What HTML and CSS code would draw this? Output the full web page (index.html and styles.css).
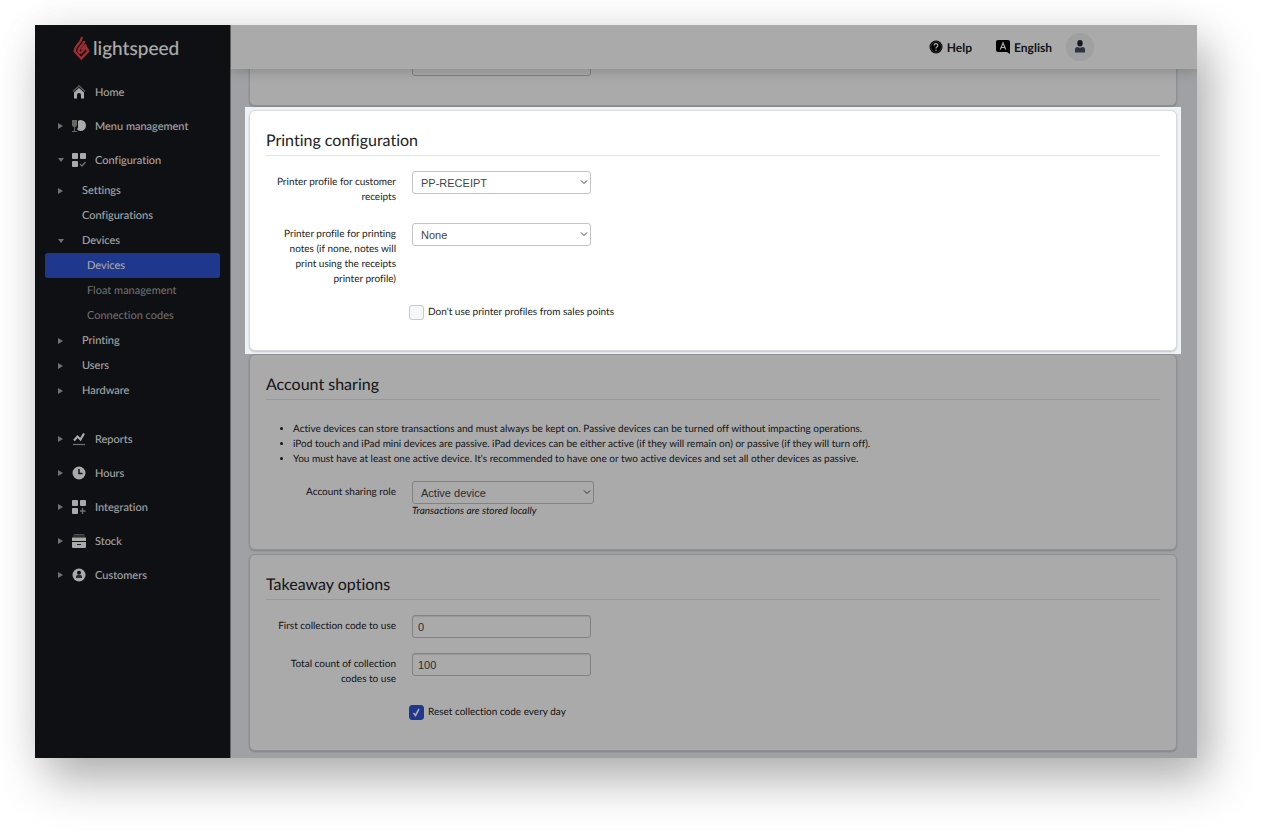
FILE: index.html
```html
<!DOCTYPE html>
<html lang="en">
<head>
    <meta charset="UTF-8">
    <meta name="viewport" content="width=device-width, initial-scale=1.0">
    <title>Lightspeed - Device configuration</title>
    <link rel="stylesheet" href="styles.css">
</head>
<body>
    <div class="app">
        <aside class="sidebar">
            <a class="logo" href="#">
                <svg width="17" height="25" viewBox="0 0 17 25" fill="none" stroke="#ee4248" stroke-width="2.4">
                    <path d="M8.500 1C10 5.500 1.700 9.500 1.700 15.200L8.300 22.500l7-7.500-2.300-3.700-5.500 6.200"/>
                    <path d="M11 5c.5 3.500-5.500 6-5.500 10.200l1.800 2.300"/>
                    <path d="M13 8.500L8.500 13.700"/>
                </svg>
                <span>lightspeed</span>
            </a>
            <nav>
                <a class="item" href="#"><i class="arrow"></i>
                    <svg class="icon" viewBox="0 0 14 14" fill="#fff"><path d="M1 6.500L7 1l6 5.500" fill="none" stroke="#888" stroke-width="1.500"/><path d="M2 7.500l5-4.500 5 4.500v6H9V10a2 2 0 0 0-4 0v3.500H2z"/></svg>
                    Home</a>
                <a class="item" href="#"><i class="arrow right"></i>
                    <svg class="icon" viewBox="0 0 14 14"><path d="M0 1h5v5a2 2 0 0 1-2 2v4h2v1H0v-1h2V8a2 2 0 0 1-2-2z" fill="#999"/><path d="M6 2q1-1 2.500-1a5.500 5.500 0 0 1 0 11Q6 12 5 10l1-1.500z" fill="#fff"/></svg>
                    Menu management</a>
                <a class="item" href="#"><i class="arrow down"></i>
                    <svg class="icon" viewBox="0 0 14 14" fill="#fff"><rect width="6" height="6" rx="1"/><rect x="8" width="6" height="6" rx="1"/><rect y="8" width="6" height="6" rx="1"/><path d="M8 11l2 2 3.500-4" fill="none" stroke="#aaa" stroke-width="1.300"/></svg>
                    Configuration</a>
                <div class="submenu">
                    <a class="subitem" href="#"><i class="arrow right"></i>Settings</a>
                    <a class="subitem" href="#"><i class="arrow"></i>Configurations</a>
                    <a class="subitem" href="#"><i class="arrow down"></i>Devices</a>
                    <a class="leaf active" href="#">Devices</a>
                    <a class="leaf" href="#">Float management</a>
                    <a class="leaf" href="#">Connection codes</a>
                    <a class="subitem" href="#"><i class="arrow right"></i>Printing</a>
                    <a class="subitem" href="#"><i class="arrow right"></i>Users</a>
                    <a class="subitem" href="#"><i class="arrow right"></i>Hardware</a>
                </div>
                <a class="item" href="#"><i class="arrow right"></i>
                    <svg class="icon" viewBox="0 0 14 14" fill="none"><path d="M2 8.500L5.500 4.500l3 3L12 1.500" stroke="#fff" stroke-width="2.200"/><path d="M1 12.500h12" stroke="#aaa" stroke-width="1.200"/></svg>
                    Reports</a>
                <a class="item" href="#"><i class="arrow right"></i>
                    <svg class="icon" viewBox="0 0 14 14"><circle cx="7" cy="7" r="6.500" fill="#fff"/><path d="M7 3v4.500h3.500" fill="none" stroke="#17191d" stroke-width="1.500"/></svg>
                    Hours</a>
                <a class="item" href="#"><i class="arrow right"></i>
                    <svg class="icon" viewBox="0 0 14 14" fill="#fff"><rect width="6" height="6" rx="1"/><rect x="8" width="6" height="6" rx="1"/><rect y="8" width="6" height="6" rx="1"/><path d="M10.500 8v6M8 11h5.500" stroke="#aaa" stroke-width="1.300"/></svg>
                    Integration</a>
                <a class="item" href="#"><i class="arrow right"></i>
                    <svg class="icon" viewBox="0 0 14 14" fill="#fff"><path d="M2 0h10v1H2zM1 1.500h12v1H1z" fill="#777"/><path d="M0 3.500h14V7H0zM0 8h14v5a1 1 0 0 1-1 1H1a1 1 0 0 1-1-1z"/><path d="M5 10.500h4" stroke="#333"/></svg>
                    Stock</a>
                <a class="item" href="#"><i class="arrow right"></i>
                    <svg class="icon" viewBox="0 0 14 14"><circle cx="7" cy="7" r="6.500" fill="#fff"/><circle cx="7" cy="4.800" r="2" fill="#17191d"/><path d="M4 10V8.500A1.500 1.500 0 0 1 5.500 7h3A1.500 1.500 0 0 1 10 8.500V10z" fill="#444"/></svg>
                    Customers</a>
            </nav>
        </aside>

        <div class="page">
            <header class="topbar">
                <a href="#">
                    <svg width="14" height="14" viewBox="0 0 14 14"><circle cx="7" cy="7" r="6.500"/><circle cx="7" cy="7" r="5.300" fill="none" stroke="#777" stroke-width=".6"/><path d="M5.200 5.500a1.800 1.800 0 1 1 2.700 1.500Q7 7.500 7 8.400M7 9.500v1.300" fill="none" stroke="#fff" stroke-width="1.300"/></svg>
                    Help</a>
                <a href="#">
                    <svg width="14" height="14" viewBox="0 0 14 14"><path d="M2 0h10a2 2 0 0 1 2 2v12l-3-2H2a2 2 0 0 1-2-2V2a2 2 0 0 1 2-2z"/><path d="M4.300 9.500L7 2.800l2.700 6.700M5.300 7.500h3.400" fill="none" stroke="#fff" stroke-width="1.200"/></svg>
                    English</a>
                <button class="avatar" type="button" aria-label="Account">
                    <svg width="12" height="14" viewBox="0 0 12 14"><ellipse cx="6" cy="3.300" rx="2.700" ry="3.300" fill="#20242e"/><path d="M1 12.500V9.500A2.500 2.500 0 0 1 3.500 7q2.500 1.500 5 0A2.500 2.500 0 0 1 11 9.500v3z" fill="#4a4d5c"/></svg>
                </button>
            </header>

            <main class="content">
                <section class="card card-scrolled">
                    <div class="row">
                        <label for="display">Display options</label>
                        <input type="text" id="display">
                    </div>
                </section>

                <div class="spotlight">
                    <section class="card">
                        <h2>Printing configuration</h2>
                        <div class="row">
                            <label for="receipts">Printer profile for customer receipts</label>
                            <select id="receipts"><option>PP-RECEIPT</option></select>
                        </div>
                        <div class="row">
                            <label for="notes">Printer profile for printing notes (if none, notes will print using the receipts printer profile)</label>
                            <select id="notes"><option>None</option></select>
                        </div>
                        <div class="check">
                            <input type="checkbox" id="noprofiles">
                            <label for="noprofiles">Don't use printer profiles from sales points</label>
                        </div>
                    </section>
                </div>

                <section class="card">
                    <h2>Account sharing</h2>
                    <ul>
                        <li>Active devices can store transactions and must always be kept on. Passive devices can be turned off without impacting operations.</li>
                        <li>iPod touch and iPad mini devices are passive. iPad devices can be either active (if they will remain on) or passive (if they will turn off).</li>
                        <li>You must have at least one active device. It's recommended to have one or two active devices and set all other devices as passive.</li>
                    </ul>
                    <div class="row">
                        <label for="role">Account sharing role</label>
                        <div>
                            <select id="role" class="wide"><option>Active device</option></select>
                            <p class="hint">Transactions are stored locally</p>
                        </div>
                    </div>
                </section>

                <section class="card">
                    <h2>Takeaway options</h2>
                    <div class="row">
                        <label for="first">First collection code to use</label>
                        <input type="text" id="first" value="0">
                    </div>
                    <div class="row">
                        <label for="total">Total count of collection codes to use</label>
                        <input type="text" id="total" value="100">
                    </div>
                    <div class="check">
                        <input type="checkbox" id="reset" checked>
                        <label for="reset">Reset collection code every day</label>
                    </div>
                </section>
            </main>
        </div>
    </div>
</body>
</html>
```

FILE: styles.css
```css
* {
    box-sizing: border-box;
}
body {
    margin: 0;
    padding: 25px 65px 75px 35px;
    min-height: 100vh;
    display: flex;
    background: #fff;
    font-family: Lato, sans-serif;
    font-size: 10px;
    line-height: 15px;
    color: #202224;
    text-rendering: geometricPrecision;
    font-variant-ligatures: none;
}
.app {
    position: relative;
    display: flex;
    flex: 1;
    overflow: hidden;
    background: #eff2f6;
}
/* drop shadow under the window */
body::before {
    content: "";
    position: absolute;
    inset: 25px 65px 75px 35px;
    box-shadow: 12px 22px 45px rgba(0, 0, 0, 0.3), 0 0 40px rgba(0, 0, 0, 0.06);
}
a {
    color: inherit;
    text-decoration: none;
}

/* sidebar */
.sidebar {
    width: 195px;
    flex-shrink: 0;
    background: #17191d;
    color: #fff;
    font-size: 11px;
}
.logo {
    display: flex;
    align-items: center;
    gap: 3px;
    height: 50px;
    padding: 0 0 4px 38px;
    font-size: 19px;
    font-weight: 500;
}
.item {
    display: flex;
    align-items: center;
    height: 34px;
    padding-left: 23px;
}
.arrow {
    width: 6px;
    margin-right: 8px;
}
.arrow::before {
    content: "";
    display: block;
    width: 0;
    border: 3px solid transparent;
}
.right::before {
    border-left: 5px solid #aaa;
    border-right: 0;
}
.down::before {
    border-top: 4px solid #aaa;
    border-bottom: 0;
}
.icon {
    width: 14px;
    height: 14px;
    margin-right: 9px;
}
.submenu {
    padding: 1px 10px 19px;
}
.subitem,
.leaf {
    display: flex;
    align-items: center;
    height: 25px;
}
.subitem {
    padding-left: 13px;
}
.subitem .arrow {
    margin-right: 18px;
}
.leaf {
    padding-left: 42px;
    color: #aaa;
}
.active {
    border-radius: 3px;
    background: #2f55d4;
    color: #fff;
}

/* top bar */
.page {
    flex: 1;
    border-left: 1px solid #999;
}
.topbar {
    position: relative;
    z-index: 1;
    display: flex;
    align-items: center;
    justify-content: flex-end;
    gap: 24px;
    height: 44px;
    padding-right: 103px;
    background: #fff;
    box-shadow: 0 2px 12px rgba(0, 0, 0, 0.2);
    font-size: 12px;
    font-weight: bold;
}
.topbar a {
    display: flex;
    align-items: center;
    gap: 4px;
}
.avatar {
    display: flex;
    align-items: center;
    justify-content: center;
    width: 28px;
    height: 28px;
    margin-left: -10px;
    padding: 0;
    border: 0;
    border-radius: 50%;
    background: #eef0f4;
}

/* cards */
.content {
    padding: 0 16px 3px 14px;
}
.card {
    margin: 0 4px 4px;
    padding: 20px 16px 15px;
    border: 1px solid #d6dade;
    border-radius: 6px;
    background: #fff;
    box-shadow: 0 1px 2px rgba(0, 0, 0, 0.2);
}
/* the card above is partly scrolled under the top bar */
.card-scrolled {
    margin-top: -17px;
    margin-bottom: 1px;
    padding-top: 0;
    padding-bottom: 14px;
}
.spotlight {
    position: relative;
    z-index: 2;
    padding: 3px 0;
    background: #eff2f6;
    box-shadow: 0 0 0 2000px rgba(0, 0, 0, 0.333);
}
.spotlight .card {
    margin-bottom: 0;
}
h2 {
    margin: 0 0 15px;
    padding-bottom: 4px;
    border-bottom: 1px solid #e5e5e5;
    font-size: 16px;
    font-weight: normal;
    line-height: 20px;
}
ul {
    margin: 22px 0 14px;
    padding-left: 27px;
}

/* form rows */
.row {
    display: flex;
    align-items: flex-start;
    gap: 16px;
    margin-bottom: 15px;
    padding-left: 2px;
}
.row > label {
    width: 128px;
    padding: 4px 0 3px;
    text-align: right;
}
select,
input[type="text"] {
    width: 179px;
    height: 23px;
    border: 1px solid #c4c4c4;
    border-radius: 3px;
    background: #fff;
    color: #444;
    font-family: "Liberation Sans", Arial, sans-serif;
    font-size: 11px;
}
select {
    appearance: none;
    padding: 0 8px;
    background: #fff url("data:image/svg+xml,%3Csvg xmlns='http://www.w3.org/2000/svg' width='8' height='5'%3E%3Cpath d='M1 .5l3 3 3-3' fill='none' stroke='%23444'/%3E%3C/svg%3E") no-repeat right 2px center;
}
input[type="text"] {
    padding: 0 5px;
    box-shadow: inset 0 1px 1px rgba(0, 0, 0, 0.1);
}
select.wide {
    display: block;
    width: 182px;
}
.hint {
    margin: 0;
    font-style: italic;
}
.check {
    display: flex;
    align-items: center;
    gap: 4px;
    margin-bottom: 15px;
    padding-left: 143px;
}
.check input {
    appearance: none;
    width: 15px;
    height: 15px;
    margin: 0;
    border: 1px solid #c4cad0;
    border-radius: 3px;
    background: #f5f7f9;
}
.check input:checked {
    border-color: #2f55d4;
    background: #2f55d4 url("data:image/svg+xml,%3Csvg xmlns='http://www.w3.org/2000/svg' width='9' height='9'%3E%3Cpath d='M1.500 5l2 2.500L7 1' fill='none' stroke='%23fff' stroke-width='1.600'/%3E%3C/svg%3E") no-repeat center;
}
```
